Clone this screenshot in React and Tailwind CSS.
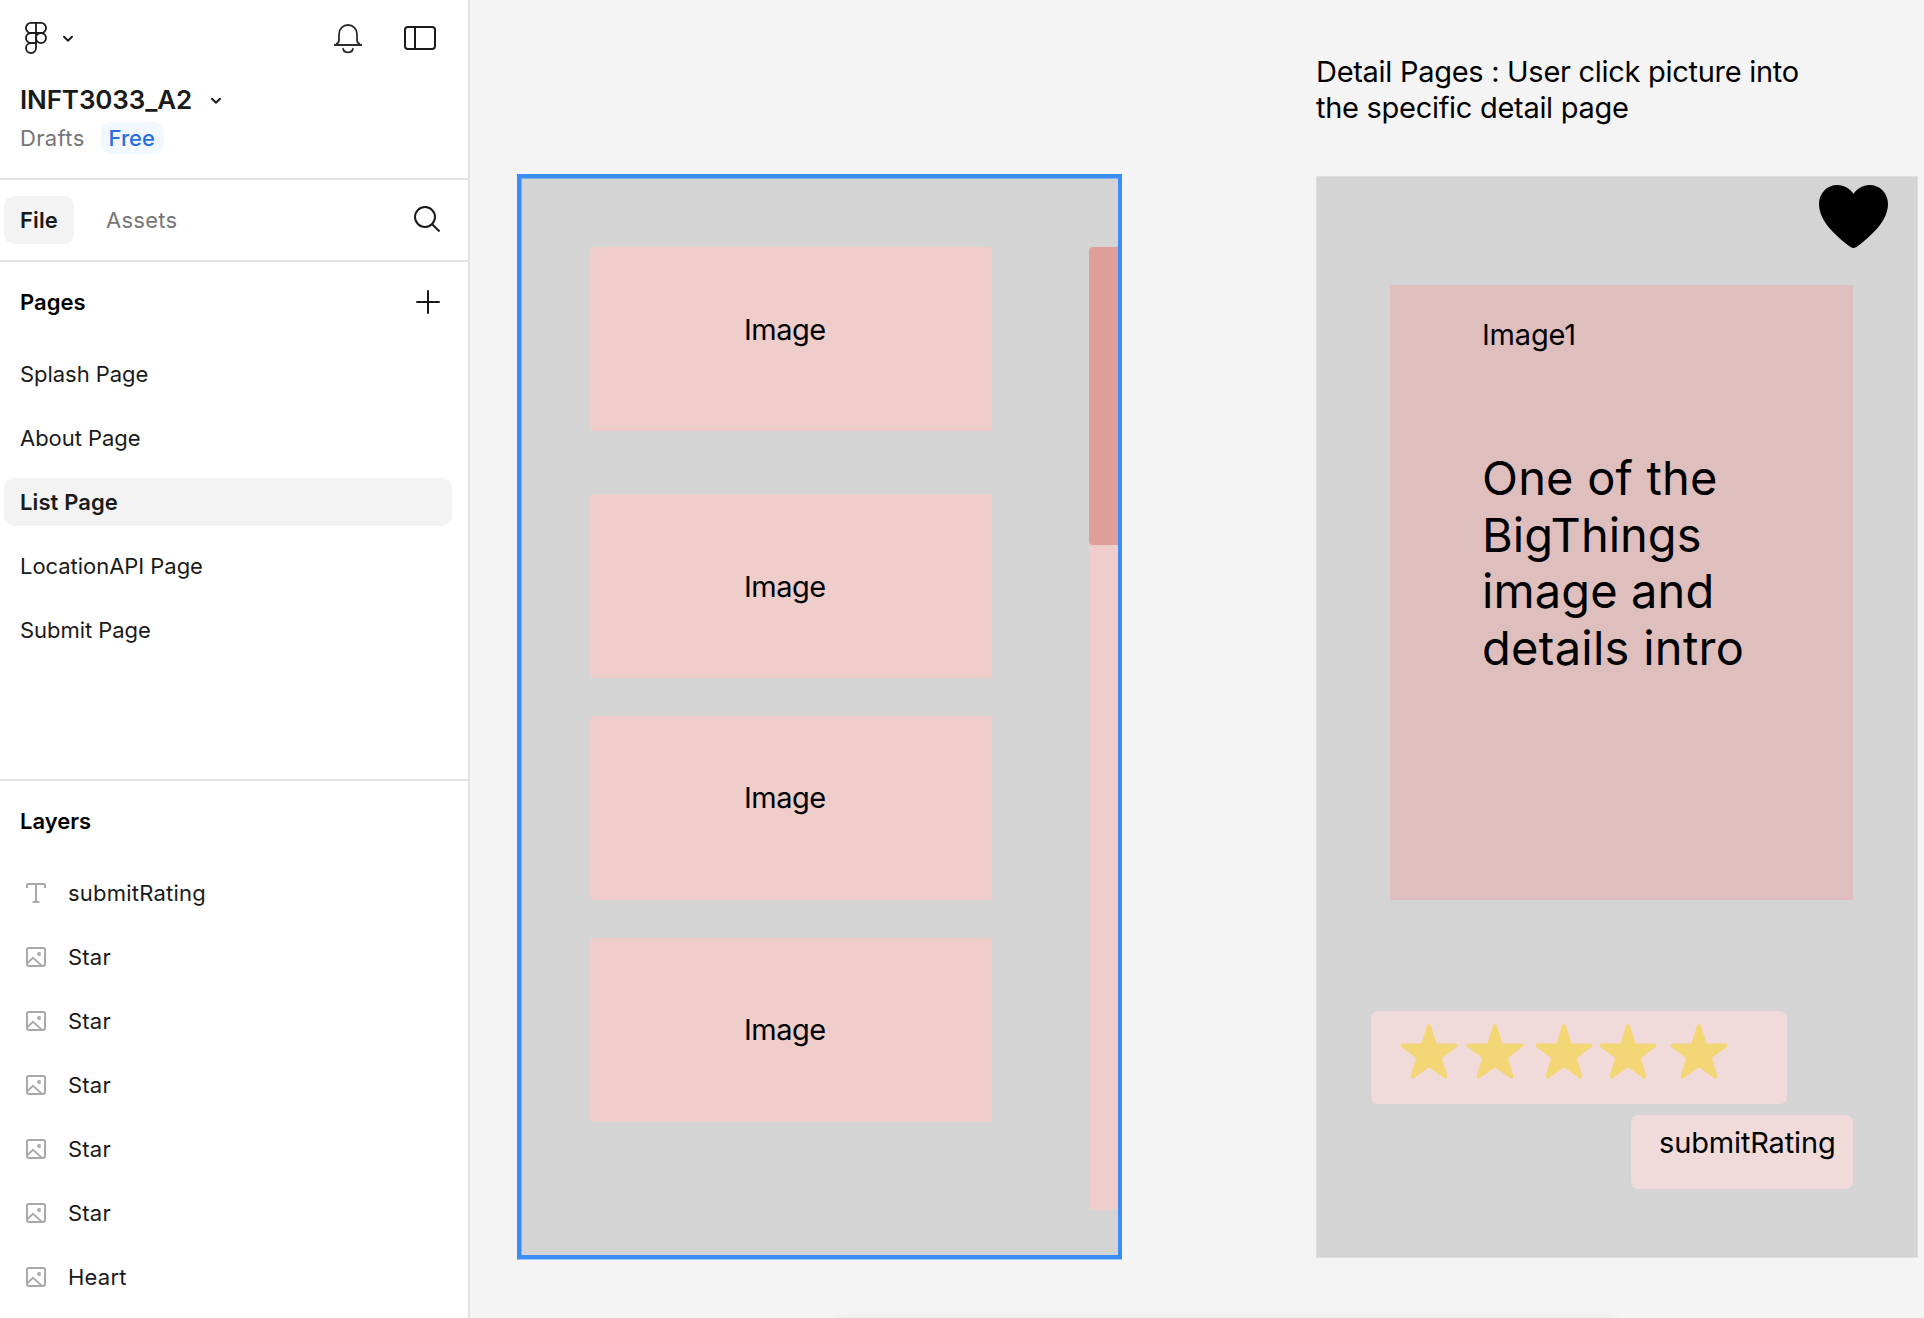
const pages = ["Splash Page", "About Page", "List Page", "LocationAPI Page", "Submit Page"];

const layers = [
  { name: "submitRating", kind: "text" },
  { name: "Star", kind: "image" },
  { name: "Star", kind: "image" },
  { name: "Star", kind: "image" },
  { name: "Star", kind: "image" },
  { name: "Star", kind: "image" },
  { name: "Heart", kind: "image" },
];

const cards = [
  { box: "top-[247px]", label: "top-[312px]" },
  { box: "top-[494px]", label: "top-[569px]" },
  { box: "top-[716px]", label: "top-[780px]" },
  { box: "top-[938px]", label: "top-[1012px]" },
];

const stars = ["left-[56.500px]", "left-[123px]", "left-[191.500px]", "left-[255.500px]", "left-[326.500px]"];

function FigmaLogo() {
  return (
    <svg width="22" height="32" viewBox="0 0 22 32" fill="none" stroke="#1a1a1a" strokeWidth="1.8">
      <path d="M11 .9H6a5.05 5.05 0 0 0 0 10.1h5zM11 .9h5a5.05 5.05 0 0 1 0 10.1h-5zM11 11H6a5.05 5.05 0 0 0 0 10.1h5z" />
      <circle cx="16" cy="16.05" r="5.05" />
      <path d="M11 21.1H6a5 5 0 1 0 5 5z" />
    </svg>
  );
}

function Chevron() {
  return (
    <svg width="12" height="8" viewBox="0 0 12 8" fill="none" stroke="#1a1a1a" strokeWidth="2" strokeLinecap="round">
      <path d="M2 1.800 6 5.700l4-3.900" />
    </svg>
  );
}

function Bell() {
  return (
    <svg width="28" height="30" viewBox="0 0 28 30" fill="none" stroke="#2c2c2c" strokeWidth="1.8">
      <path d="M0 21h28" strokeWidth="2" />
      <path d="M2 20.4c2.400-1.200 3-2.400 3-4.400V10a9 9 0 0 1 18 0v6c0 2 .6 3.200 3 4.400" />
      <path d="M8.900 24.200a5.200 5.200 0 0 0 10.200 0" />
    </svg>
  );
}

function PanelIcon() {
  return (
    <svg width="32" height="24" viewBox="0 0 32 24" fill="none" stroke="#1a1a1a" strokeWidth="2">
      <rect x="1" y="1" width="30" height="22" rx="3" />
      <path d="M11 1v22" />
    </svg>
  );
}

function SearchIcon() {
  return (
    <svg width="26" height="26" viewBox="0 0 26 26" fill="none" stroke="#1a1a1a" strokeWidth="2">
      <circle cx="11" cy="11" r="10" />
      <path d="m18.200 18.200 7.300 7.300" />
    </svg>
  );
}

function PlusIcon() {
  return (
    <svg width="24" height="24" viewBox="0 0 24 24" stroke="#1a1a1a" strokeWidth="2">
      <path d="M12 .3v23.400M.3 12h23.400" />
    </svg>
  );
}

function TextLayerIcon() {
  return (
    <svg width="20" height="20" viewBox="0 0 20 20" fill="none" stroke="#a9a9a9" strokeWidth="2">
      <path d="M1 5V2a1 1 0 0 1 1-1h16a1 1 0 0 1 1 1v3M10 1v18M6.500 19h7" />
    </svg>
  );
}

function ImageLayerIcon() {
  return (
    <svg width="20" height="20" viewBox="0 0 20 20" fill="none" stroke="#a9a9a9" strokeWidth="2">
      <rect x="1" y="1" width="18" height="18" rx="2" />
      <path d="m1.500 16 5.500-5.200 9 8" strokeWidth="1.800" />
      <circle cx="13" cy="7" r="2" fill="#a9a9a9" stroke="none" />
    </svg>
  );
}

function Heart() {
  return (
    <svg width="69" height="64" viewBox="0 0 69 64">
      <path d="M34.500 8.700C31 3.800 25 0 18.500 0 8 0 0 8 0 19c0 15 13 29 29.500 41.500 3.500 3.300 6.500 3.300 10 0C56 48 69 34 69 19 69 8 61 0 50.500 0 44 0 38 3.800 34.500 8.700Z" />
    </svg>
  );
}

function Star() {
  return (
    <svg width="58" height="56" viewBox="0 0 58 56">
      <path
        d="M29 2.300 35.200 21.500 55.400 21.500 39.600 33.100 45.400 52.500 29 40.900 12.600 52.500 18.400 33.100 2.600 21.500 22.800 21.500Z"
        fill="#f3d675"
        stroke="#f3d675"
        strokeWidth="4"
        strokeLinejoin="round"
      />
    </svg>
  );
}

function Sidebar() {
  return (
    <aside className="flex h-full w-[470px] shrink-0 flex-col border-r-2 border-[#e2e2e2] bg-white text-[22px] leading-8 tracking-[0.11px] text-[#1a1a1a]">
      <header className="flex h-[180px] shrink-0 flex-col border-b-2 border-[#e2e2e2]">
        <div className="flex h-[76px] items-center pl-[25px] pr-8">
          <FigmaLogo />
          <span className="ml-[15px] mt-px">
            <Chevron />
          </span>
          <span className="ml-auto mt-[2px]">
            <Bell />
          </span>
          <span className="ml-[42px]">
            <PanelIcon />
          </span>
        </div>
        <div className="flex h-12 items-center pl-5">
          <h1 className="w-[174px] whitespace-nowrap text-[26px] font-semibold tracking-[-0.120px]">INFT3033_A2</h1>
          <span className="ml-4 mt-[2px]">
            <Chevron />
          </span>
        </div>
        <div className="-mt-[2px] flex items-center pl-5">
          <span className="w-[81px] tracking-[0.350px] text-[#767676]">Drafts</span>
          <span className="w-[63px] rounded-[10px] bg-[#f1f8ff] pl-[7.500px] font-medium tracking-normal text-[#2a6de0]">Free</span>
        </div>
      </header>

      <nav className="flex h-[82px] shrink-0 items-center border-b-2 border-[#e2e2e2] pl-1 pr-7">
        <span className="flex h-12 w-[70px] items-center rounded-[10px] bg-[#f3f3f3] pl-4 font-semibold">File</span>
        <span className="ml-8 tracking-[0.250px] text-[#767676]">Assets</span>
        <span className="mb-[2px] ml-auto">
          <SearchIcon />
        </span>
      </nav>

      <section className="flex h-[519px] shrink-0 flex-col border-b-2 border-[#e2e2e2]">
        <div className="flex h-20 items-center justify-between pl-5 pr-7">
          <h2 className="font-semibold tracking-normal text-black">Pages</h2>
          <PlusIcon />
        </div>
        <ul className="flex flex-col gap-4 pl-1 pr-4 pt-2">
          {pages.map((page) => (
            <li
              key={page}
              className={
                page === "List Page"
                  ? "flex h-12 items-center rounded-[10px] bg-[#f3f3f3] pl-4 font-semibold"
                  : "flex h-12 items-center pl-4 tracking-[-0.040px]"
              }
            >
              {page}
            </li>
          ))}
        </ul>
      </section>

      <section className="flex min-h-0 grow flex-col overflow-hidden">
        <h2 className="flex h-20 shrink-0 items-center pl-5 font-semibold tracking-normal text-black">Layers</h2>
        <ul className="flex flex-col tracking-[0.220px]">
          {layers.map((layer, i) => (
            <li key={i} className="flex h-16 shrink-0 items-center gap-[22px] pl-[26px]">
              {layer.kind === "text" ? <TextLayerIcon /> : <ImageLayerIcon />}
              {layer.name}
            </li>
          ))}
        </ul>
      </section>
    </aside>
  );
}

function ListFrame() {
  return (
    <div className="absolute left-[47px] top-[174px] h-[1085px] w-[605px] bg-[#d4d4d4] shadow-[0_1px_0_#9cc4fb]">
      <div className="absolute inset-0 overflow-hidden">
        {cards.map((card) => (
          <div key={card.box}>
            <div className={`absolute left-[73px] h-[184px] w-[402px] -translate-y-[174px] rounded-[4px] bg-[#efcdcb] ${card.box}`} />
            <p className={`absolute left-[227px] -translate-y-[174px] tracking-[-0.500px] ${card.label}`}>Image</p>
          </div>
        ))}
        <div className="absolute left-[572px] top-[73px] h-[963px] w-10 rounded-[4px] bg-[#efcdcb]">
          <div className="h-[298px] rounded-[4px] bg-[#df9e9a]" />
        </div>
      </div>
      <div className="absolute inset-0 border-4 border-[#3b8dfa] shadow-[inset_1px_1px_0_#86b0ea]" />
    </div>
  );
}

function DetailFrame() {
  return (
    <div className="absolute left-[846px] top-[176px] h-[1082px] w-[602px] border border-[#dedede] bg-[#d4d4d4]">
      <div className="absolute left-[502px] top-[8px]">
        <Heart />
      </div>
      <div className="absolute left-[73px] top-[108px] h-[615px] w-[463px] bg-[#debfbd]">
        <p className="absolute left-[92px] top-[32px] tracking-[-0.200px]">Image1</p>
        <div className="absolute left-[92px] top-[165px] whitespace-nowrap text-[47px] leading-[56.700px]">
          <p className="tracking-[0.200px]">One of the</p>
          <p>BigThings</p>
          <p className="tracking-[0.120px]">image and</p>
          <p className="tracking-[0.280px]">details intro</p>
        </div>
      </div>
      <div className="absolute left-[54px] top-[834px] h-[93px] w-[416px] rounded-[7px] bg-[#f0dbda]">
        {stars.map((left) => (
          <span key={left} className={`absolute -ml-[28px] top-[13px] ${left}`}>
            <Star />
          </span>
        ))}
      </div>
      <div className="absolute left-[314px] top-[938px] h-[74px] w-[222px] rounded-[7px] bg-[#f0dbda]">
        <p className="absolute left-[28px] top-[10px] tracking-[-0.150px]">submitRating</p>
      </div>
    </div>
  );
}

export default function App() {
  return (
    <div className="flex h-[1318px] w-[1924px] overflow-hidden bg-[#f4f4f4] font-['Inter',sans-serif] [font-optical-sizing:none]">
      <Sidebar />
      <main className="relative grow overflow-hidden text-[29px] leading-[35.500px] text-black">
        <p className="absolute left-[846px] top-[54px] whitespace-nowrap tracking-[-0.290px]">
          Detail Pages : User click picture into
          <br />
          the specific detail page
        </p>
        <ListFrame />
        <DetailFrame />
        <div className="absolute left-[350px] top-[1320px] h-20 w-[814px] rounded-[26px] bg-white shadow-[0_0_10px_rgba(0,0,0,0.1)]" />
      </main>
    </div>
  );
}
